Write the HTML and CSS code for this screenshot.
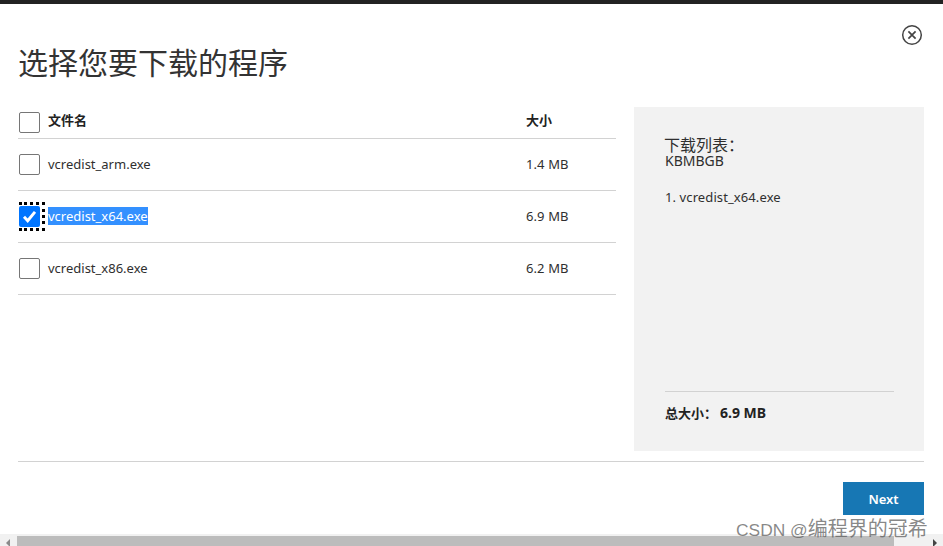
FILE: index.html
```html
<!DOCTYPE html>
<html lang="zh">
<head>
<meta charset="utf-8">
<title>选择您要下载的程序</title>
<link rel="stylesheet" href="styles.css">
</head>
<body>
<div class="page">
  <div class="topbar"></div>
  <main class="dialog">
    <div class="close-row">
      <svg class="close" viewBox="0 0 22 22" width="22" height="22"><circle cx="11" cy="11" r="9.3" fill="none" stroke="#444" stroke-width="1.5"/><path d="M7.4 7.4L14.6 14.6M14.6 7.4L7.4 14.6" fill="none" stroke="#444" stroke-width="1.7"/></svg>
    </div>
    <h1 class="title">选择您要下载的程序</h1>
    <div class="columns">
      <section class="files">
        <div class="row head">
          <span class="box"></span><span class="name">文件名</span><span class="size">大小</span>
        </div>
        <div class="row">
          <span class="box"></span><span class="name">vcredist_arm.exe</span><span class="size">1.4 MB</span>
        </div>
        <div class="row">
          <span class="focus"><span class="box checked"><svg viewBox="0 0 21 21" width="21" height="21"><path d="M5 10.8l3.7 3.9L16 5.8" fill="none" stroke="#fff" stroke-width="2.9"/></svg></span></span><span class="name"><span class="selected">vcredist_x64.exe</span></span><span class="size">6.9 MB</span>
        </div>
        <div class="row">
          <span class="box"></span><span class="name">vcredist_x86.exe</span><span class="size">6.2 MB</span>
        </div>
      </section>
      <aside class="panel">
        <div class="panel-top">
          <div class="panel-title">下载列表：</div>
          <div class="panel-units">KBMBGB</div>
          <div class="panel-item">1. vcredist_x64.exe</div>
        </div>
        <div class="total"><span>总大小：</span><span class="total-value">6.9 MB</span></div>
      </aside>
    </div>
    <div class="footer">
      <button class="next" type="button">Next</button>
    </div>
  </main>
  <div class="scrollbar">
    <span class="arrow left"></span>
    <span class="thumb"></span>
    <span class="arrow right"></span>
  </div>
  <div class="watermark">CSDN @<span class="watermark-cjk">编程界的冠希</span></div>
</div>
</body>
</html>
```
FILE: styles.css
```css
* { box-sizing: border-box; }
html, body { margin: 0; padding: 0; height: 100%; overflow: hidden; background: #fff; }
body { font-family: "Noto Sans", "Open Sans", "Noto Sans CJK SC", sans-serif; color: #2f2f2f; }
.page { position: relative; width: 943px; height: 546px; display: flex; flex-direction: column; overflow: hidden; }
.topbar { height: 4px; background: #222; flex: none; }
.dialog { flex: 1; padding: 0 19px 0 18px; display: flex; flex-direction: column; min-height: 0; }
.close-row { display: flex; justify-content: flex-end; padding-top: 20px; height: 37px; margin-right: 1px; }
.close { display: block; height: 22px; }
.title { margin: 0; height: 66px; font: 400 30px/40px "Noto Sans CJK SC", sans-serif; color: #333; }
.columns { display: flex; gap: 18px; height: 344px; }
.files { width: 598px; flex: none; }
.row { display: flex; align-items: center; height: 52px; border-bottom: 1px solid #d2d2d2; font-size: 13px; padding-left: 1px; }
.row.head { height: 32px; font-weight: 700; color: #222; }
.row .name, .row .size { margin-bottom: 2px; }
.row.head .name, .row.head .size { margin-bottom: 6px; }
.box { display: block; flex: none; width: 21px; height: 21px; border: 1px solid #767676; border-radius: 2px; background: #fff; }
.box.checked { position: relative; z-index: 1; background: #0075ff; border: 0; }
.box svg { display: block; }
.focus { position: relative; flex: none; width: 21px; height: 21px; margin-bottom: 1px; }
.focus::after { content: ""; box-sizing: border-box; position: absolute; left: 0; top: -4px; width: 26px; height: 29px; border: 3px dotted #000; }
.name { margin-left: 8px; width: 478px; flex: none; }
.selected { background: #3390ff; color: #fff; }
.size { flex: none; letter-spacing: 0.1px; }
.panel { width: 290px; flex: none; background: #f2f2f2; padding: 29px 30px 0 31px; display: flex; flex-direction: column; }
.panel-top { flex: 1; font-size: 13px; }
.panel-title { font: 400 16px/17px "Noto Sans CJK SC", sans-serif; margin-left: -1px; }
.panel-units { font-size: 14px; line-height: 16px; }
.panel-item { margin-top: 19px; line-height: 18px; letter-spacing: 0.1px; }
.total { height: 60px; border-top: 1px solid #d2d2d2; padding-top: 12px; font-size: 13px; font-weight: 700; line-height: 18px; color: #222; }
.total-value { margin-left: 3px; font-size: 14px; }
.footer { margin-top: 10px; border-top: 1px solid #d2d2d2; padding-top: 20px; display: flex; justify-content: flex-end; }
.next { width: 81px; height: 33px; border: 0; padding: 0; background: #1777b4; color: #fff; font: 600 13px "Noto Sans", sans-serif; }
.scrollbar { position: absolute; left: 0; right: 0; bottom: 0; height: 12px; background: #f1f1f1; }
.thumb { position: absolute; left: 17px; width: 877px; top: 2px; bottom: 0; background: #bcbcbc; }
.arrow { position: absolute; top: 5px; width: 0; height: 0; border-top: 4px solid transparent; border-bottom: 4px solid transparent; }
.arrow.left { left: 6px; border-right: 4px solid #8a8a8a; }
.arrow.right { right: 6px; border-left: 4px solid #444; }
.watermark { position: absolute; left: 736px; top: 517px; font: 400 17.4px/22px "Liberation Sans", "Noto Sans CJK SC", sans-serif; color: rgba(90,90,90,0.72); white-space: nowrap; }
.watermark-cjk { font-size: 20px; font-family: "Noto Sans CJK SC", sans-serif; }
```
